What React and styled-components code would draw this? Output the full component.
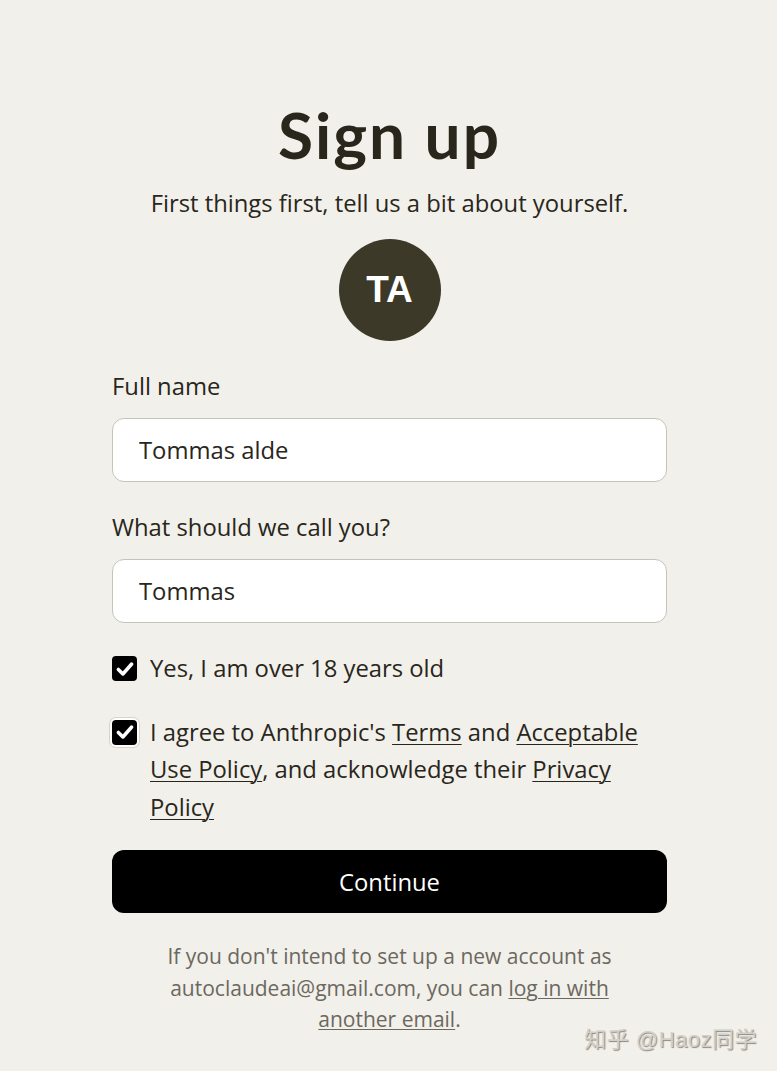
import React from 'react';
import styled, { createGlobalStyle } from 'styled-components';

const Global = createGlobalStyle`
  html, body {
    margin: 0;
    padding: 0;
    background: #f2f0ea;
  }
  body {
    font-family: "Open Sans", "Noto Sans", sans-serif;
    color: #29261b;
  }
`;

const Page = styled.div`
  width: 777px;
  height: 1071px;
  box-sizing: border-box;
  padding-left: 2px;
  display: flex;
  justify-content: center;
  position: relative;
  overflow: hidden;
`;

const Column = styled.div`
  width: 555px;
  padding-top: 96px;
  display: flex;
  flex-direction: column;
  align-items: stretch;
`;

const Title = styled.h1`
  margin: 0;
  text-align: center;
  font-family: "Lato", "Liberation Sans", sans-serif;
  font-weight: 700;
  font-size: 64px;
  line-height: 78px;
  letter-spacing: 2px;
  color: #29261b;
`;

const Subtitle = styled.p`
  margin: 0;
  text-align: center;
  font-size: 23.8px;
  line-height: 34px;
  margin-top: 12px;
`;

const Avatar = styled.div`
  align-self: center;
  width: 102px;
  height: 102px;
  border-radius: 50%;
  background: #3d3929;
  color: #fff;
  display: flex;
  align-items: center;
  justify-content: center;
  font-family: "Liberation Sans", Arial, sans-serif;
  font-weight: 700;
  font-size: 37px;
  margin-top: 19px;
`;

const Field = styled.div`
  display: flex;
  flex-direction: column;
  margin-top: ${p => p.$top}px;
`;

const Label = styled.label`
  font-size: 23.8px;
  line-height: 34px;
`;

const Input = styled.input`
  margin-top: 15px;
  height: 64px;
  box-sizing: border-box;
  border: 1px solid #c6c3bb;
  border-radius: 12px;
  background: #fff;
  padding: 0 26px;
  font-family: inherit;
  font-size: 23.8px;
  color: #29261b;
  outline: none;
`;

const CheckRow = styled.div`
  display: flex;
  align-items: flex-start;
  gap: 13px;
  margin-top: ${p => p.$top}px;
`;

const Box = styled.span`
  flex: none;
  width: 25px;
  height: 25px;
  margin-top: 6px;
  border-radius: 4px;
  background: #000;
  display: flex;
  align-items: center;
  justify-content: center;
  box-shadow: ${p => (p.$focus ? '0 0 0 2px #fff, 0 0 0 3px #d8d5cc' : 'none')};
`;

const CheckText = styled.span`
  font-size: 23.8px;
  line-height: 37.5px;
  max-width: 500px;

  a {
    color: inherit;
    text-decoration: underline;
    text-underline-offset: 3px;
    text-decoration-thickness: 1px;
  }
`;

const Button = styled.button`
  margin-top: 24px;
  height: 63px;
  border: none;
  border-radius: 12px;
  background: #000;
  color: #fff;
  font-family: inherit;
  font-size: 23.8px;
`;

const Footer = styled.p`
  margin: 28px auto 0;
  width: 490px;
  text-align: center;
  color: #6b6860;
  font-size: 21px;
  line-height: 31.5px;

  a {
    color: inherit;
    text-decoration: underline;
    text-underline-offset: 2px;
    text-decoration-thickness: 1px;
  }
`;

const Watermark = styled.div`
  position: absolute;
  right: 20px;
  bottom: 18px;
  font-family: "Liberation Sans", "Noto Sans CJK SC", sans-serif;
  font-size: 22px;
  color: #d2d0cb;
  text-shadow: 1px 1px 1px #8a8884;
  letter-spacing: 0.5px;
`;

const Check = () => (
  <svg width="20" height="20" viewBox="0 0 24 24" fill="none" stroke="#fff" strokeWidth="4.2" strokeLinecap="round" strokeLinejoin="round">
    <polyline points="4 12.5 9.5 18 20 6" />
  </svg>
);

export default function App() {
  return (
    <Page>
      <Global />
      <Column>
        <Title>Sign up</Title>
        <Subtitle>First things first, tell us a bit about yourself.</Subtitle>
        <Avatar>TA</Avatar>

        <Field $top={28}>
          <Label>Full name</Label>
          <Input defaultValue="Tommas alde" />
        </Field>

        <Field $top={28}>
          <Label>What should we call you?</Label>
          <Input defaultValue="Tommas" />
        </Field>

        <CheckRow $top={27}>
          <Box><Check /></Box>
          <CheckText>Yes, I am over 18 years old</CheckText>
        </CheckRow>

        <CheckRow $top={26}>
          <Box $focus><Check /></Box>
          <CheckText>
            I agree to Anthropic's <a href="#">Terms</a> and <a href="#">Acceptable</a> <a href="#">Use Policy</a>, and acknowledge their <a href="#">Privacy</a> <a href="#">Policy</a>
          </CheckText>
        </CheckRow>

        <Button>Continue</Button>

        <Footer>
          <span>If you don't intend to set up a new account as</span>{' '}
          <span>autoclaudeai@gmail.com, you can</span>{' '}
          <a href="#">log in with</a> <a href="#">another email</a>.
        </Footer>
      </Column>
      <Watermark>知乎 @Haoz同学</Watermark>
    </Page>
  );
}
